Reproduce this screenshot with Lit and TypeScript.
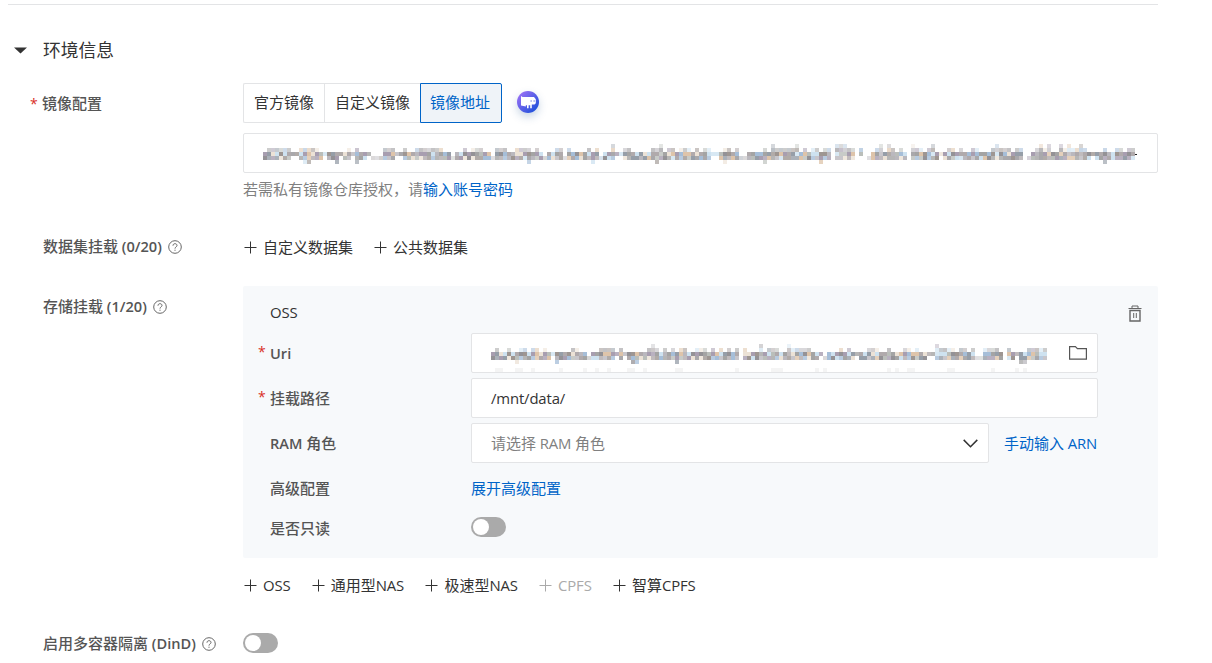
import { LitElement, html, svg, css } from "lit";
import { customElement, property } from "lit/decorators.js";

// Each code describes which of the five 4px rows of a column are filled.
const SHAPES: Record<string, number[]> = {
  o: [0, 0, 1, 1, 0],
  l: [0, 0.55, 1, 0.8, 0],
  h: [0.4, 0.65, 0.8, 0.8, 0],
  P: [0, 0.6, 1, 0.8, 0.65],
  p: [0, 0, 1, 1, 0.75],
  "-": [0, 0, 0.8, 0, 0],
  ".": [0, 0, 0, 0.45, 0],
  '"': [0, 0.7, 1, 0, 0],
  " ": [0, 0, 0, 0, 0],
};
const TINTS = [
  [148, 146, 150], [176, 170, 172], [158, 150, 146], [166, 190, 216],
  [186, 184, 190], [222, 196, 170], [150, 158, 168], [206, 226, 240],
  [186, 190, 186], [168, 158, 176], [236, 226, 214], [164, 164, 164],
];

@customElement("redacted-text")
class RedactedText extends LitElement {
  @property() pattern = "";
  @property({ type: Array }) specks: number[] = [];
  static styles = css`
    :host { display: block; flex: none; }
    svg { display: block; }
  `;
  render() {
    const cells: unknown[] = [];
    let seed = 7;
    [...this.pattern].forEach((c, x) => {
      SHAPES[c].forEach((a, y) => {
        seed = (seed * 16807) % 2147483647;
        if (!a) return;
        const t = TINTS[Math.floor(seed / 97) % TINTS.length];
        const [r, g, b] = t.map((v) => Math.round(255 - (255 - v) * a));
        cells.push(svg`<rect x=${x * 4} y=${y * 4} width="4" height="4" fill="rgb(${r},${g},${b})"/>`);
      });
    });
    for (const n of this.specks) {
      cells.push(svg`<rect x=${n * 4} y="24" width="4" height="4" fill="#f4f4f4"/>`);
    }
    return html`<svg width=${this.pattern.length * 4} height="28" shape-rendering="crispEdges">${cells}</svg>`;
  }
}

const IMAGE_URL = (
  "ollllll--lPPllo-oop-ol-Poo-...lll--loollllllloo.oolollloo.llloolllPolo.ooll" +
  ".loooolpl.ooh--llooooolPhollolllololl--oPlol..ooooPohlllllholollpll hhhll \"" +
  " .olhohlolo hllolho-olloloollooolhllloll .olhlhoohlhllhlo-ooPoolloll---"
).slice(0, 218);
const OSS_URI = (
  "oloolopllollolo-pooolloo.oollll-l-oppoolhlololplloolllolololol looohol" +
  "lloohllllloo-.ooololo-oollloolooolloloo--hllllollol..llllo lo-ppl"
).padEnd(139, "l").slice(0, 139);
const OSS_SPECKS = [1, 2, 6, 7, 10, 17, 23, 26, 29, 34, 35, 38, 46, 47, 61, 70, 71, 72, 81, 83, 99, 101, 104, 105, 114, 115, 125, 131, 133];

const help = html`<svg class="help" width="14" height="14" viewBox="0 0 14 14" fill="none" stroke="#666" stroke-width="1">
  <circle cx="7" cy="7" r="6.3"/>
  <path d="M5 5.7C5 4.4 5.8 3.7 7 3.7s2 .7 2 1.8c0 1.3-2 1.5-2 3.1M7 9.7v1.1"/>
</svg>`;
const add = (label: unknown, off = false) => html`<button class="add ${off ? "off" : ""}">
  <svg width="13" height="13" viewBox="0 0 13 13" fill="none" stroke="currentColor"><path d="M6.5 .5v12M.5 6.5h12"/></svg><span>${label}</span>
</button>`;
const lt = (s: string) => html`<span class="lt">${s}</span>`;

@customElement("app-root")
class AppRoot extends LitElement {
  static styles = css`
    :host {
      display: block; width: 1212px; height: 663px; overflow: hidden; box-sizing: border-box;
      padding: 4px 54px 0 8px; background: #fff; color: #333;
      font: 15px/20px "Noto Sans CJK SC", sans-serif;
    }
    * { box-sizing: border-box; }
    svg { display: block; flex: none; }
    .lt { font-family: "Open Sans", "Noto Sans", sans-serif; font-size: 14.9px; letter-spacing: -0.15px; }
    .section { border-top: 1px solid #e3e4e6; }
    .title { display: flex; align-items: center; height: 78px; padding: 9px 0 0 6px; font-size: 17.8px; gap: 16px; }
    .title svg { margin-top: 4px; }
    .row { display: grid; grid-template-columns: 200px 915px; padding-left: 35px; }
    .label { position: relative; display: flex; align-items: center; color: #555; font-weight: 500; white-space: pre; }
    .req::before { content: "*"; position: absolute; left: -12px; top: 1px; color: #d93026; font: 14px/20px "Open Sans", sans-serif; }
    .help { margin: 2px 0 0 6px; }
    .image { height: 117px; }
    .image > .label { align-self: start; margin: 10px 0 0 -1px; }
    .tabs { display: flex; height: 40px; }
    .tab { height: 40px; padding: 0 10px 2px; border: 1px solid #e3e4e6; border-right: 0; background: #fff; font: inherit; color: #333; white-space: nowrap; }
    .tab:first-child { border-radius: 2px 0 0 2px; }
    .tab.wide { width: 96px; }
    .tab.on { border: 1px solid #0064c8; padding: 0 10px 2px 9px; background: #eff3f8; color: #0064c8; border-radius: 0 2px 2px 0; width: 82px; text-align: left; }
    .bot { display: flex; margin: 8px 0 0 15px; width: 22px; height: 22px; border-radius: 50%; box-shadow: 0 4px 8px rgba(40, 90, 150, .25); }
    .field { display: flex; align-items: center; height: 40px; border: 1px solid #e3e4e6; border-radius: 2px; background: #fff; padding: 0 20px 0 19px; }
    .url { margin-top: 10px; }
    redacted-text { margin-top: 10px; }
    .tail { width: 2px; height: 1px; margin-top: 2px; background: #222; }
    .hint { margin-top: 6px; color: #808080; }
    .link { color: #0064c8; text-decoration: none; white-space: nowrap; }
    .data { height: 86px; }
    .data > .label { height: 20px; margin-top: 36px; }
    .actions { display: flex; gap: 20px; }
    .data .actions { margin-top: 37px; }
    .add { display: flex; align-items: center; gap: 6px; border: 0; padding: 0 0 0 1px; background: none; font: inherit; height: 20px; color: #333; white-space: nowrap; }
    .add.off { color: #aaa; }
    .store > .label { height: 20px; margin-top: 10px; }
    .panel { height: 272px; background: #f7f9fb; border-radius: 2px; padding: 16px 16px 0 27px; }
    .head { display: flex; justify-content: space-between; height: 31px; font-weight: 500; }
    .label .lt { font-weight: 600; font-size: 14.6px; letter-spacing: 0; }
    .head .lt { font-weight: 500; }
    .trash { margin-top: 3px; }
    .line { display: grid; grid-template-columns: 201px 627px; height: 45px; }
    .line .label { height: 40px; }
    .line .req::before { top: 9px; }
    .pick { justify-content: space-between; padding: 0 10px 0 19px; }
    .folder { margin-top: -1px; }
    .ram { display: grid; grid-template-columns: 518px auto; align-items: center; gap: 15px; height: 40px; }
    .ram .field { color: #808080; justify-content: space-between; padding-right: 10px; }
    .toggle { width: 35px; height: 20px; border-radius: 10px; background: #aaa; padding: 2px; }
    .toggle::before { content: ""; display: block; width: 16px; height: 16px; border-radius: 50%; background: #fff; }
    .line .link { align-self: start; margin-top: 10px; }
    .ram .link { align-self: center; margin: 0; }
    .readonly .label { height: 30px; }
    .readonly .toggle { margin-top: 4px; }
    .more { height: 54px; align-items: center; gap: 20.3px; }
    .dind { height: 62px; align-items: center; }
  `;
  render() {
    return html`<main class="section">
      <header class="title">
        <svg width="13" height="7" viewBox="0 0 13 7"><path d="M0 .5h13L6.5 6.5z" fill="#333"/></svg>
        <span>环境信息</span>
      </header>
      <section class="row image">
        <div class="label req">镜像配置</div>
        <div>
          <div class="tabs">
            <button class="tab">官方镜像</button><button class="tab wide">自定义镜像</button><button class="tab on">镜像地址</button>
            <span class="bot"><svg width="22" height="22" viewBox="0 0 22 22">
              <defs><linearGradient id="g" x1="0" y1="0" x2="1" y2="1"><stop offset=".1" stop-color="#9a70f5"/><stop offset=".85" stop-color="#2452dc"/></linearGradient></defs>
              <circle cx="11" cy="11" r="11" fill="url(#g)"/>
              <path d="M4 5l1.500 1H17l1.800 2.300v4L17.500 13.500H14.800v3.700h-1.600v-3h-1.600v3H10v-3H8.800V15.500L4 14.500z" fill="#fff"/>
              <path d="M13.500 10h1.300M16.500 10h1.300" stroke="#5361df"/>
            </svg></span>
          </div>
          <div class="field url"><redacted-text .pattern=${IMAGE_URL}></redacted-text><i class="tail"></i></div>
          <div class="hint">若需私有镜像仓库授权，请<a class="link">输入账号密码</a></div>
        </div>
      </section>
      <section class="row data">
        <div class="label">数据集挂载${lt(" (0/20)")}${help}</div>
        <div class="actions">${add("自定义数据集")}${add("公共数据集")}</div>
      </section>
      <section class="row store">
        <div class="label">存储挂载${lt(" (1/20)")}${help}</div>
        <div>
          <div class="panel">
            <div class="head">${lt("OSS")}
              <svg class="trash" width="14" height="17" viewBox="0 0 14 17" fill="none" stroke="#666"><path d="M.5 3.500h13M4 3V1h6v2" /><path d="M2 5.500h10v10.500H2z" stroke-width="1.400"/><path d="M5.700 8v5M8.300 8v5"/></svg>
            </div>
            <div class="line"><div class="label req">${lt("Uri")}</div>
              <div class="field pick"><redacted-text .pattern=${OSS_URI} .specks=${OSS_SPECKS}></redacted-text>
                <svg class="folder" width="18" height="14" viewBox="0 0 18 14" fill="none" stroke="#555" stroke-width="1.200"><path d="M.6.700h5.800l2 2h9v10.500H.6z"/></svg></div></div>
            <div class="line"><div class="label req">挂载路径</div><div class="field">${lt("/mnt/data/")}</div></div>
            <div class="line"><div class="label">${lt("RAM ")}角色</div>
              <div class="ram"><div class="field"><span>请选择${lt(" RAM ")}角色</span>
                <svg width="15" height="9" viewBox="0 0 15 9" fill="none" stroke="#333" stroke-width="1.500"><path d="M.7.900l6.800 6.800L14.300.900"/></svg></div>
                <a class="link">手动输入${lt(" ARN")}</a></div></div>
            <div class="line"><div class="label">高级配置</div><a class="link">展开高级配置</a></div>
            <div class="line readonly"><div class="label">是否只读</div><div><div class="toggle"></div></div></div>
          </div>
          <div class="actions more">${add(lt("OSS"))}${add(html`通用型${lt("NAS")}`)}${add(html`极速型${lt("NAS")}`)}${add(lt("CPFS"), true)}${add(html`智算${lt("CPFS")}`)}</div>
        </div>
      </section>
      <section class="row dind"><div class="label">启用多容器隔离${lt(" (DinD)")}${help}</div><div class="toggle"></div></section>
    </main>`;
  }
}
